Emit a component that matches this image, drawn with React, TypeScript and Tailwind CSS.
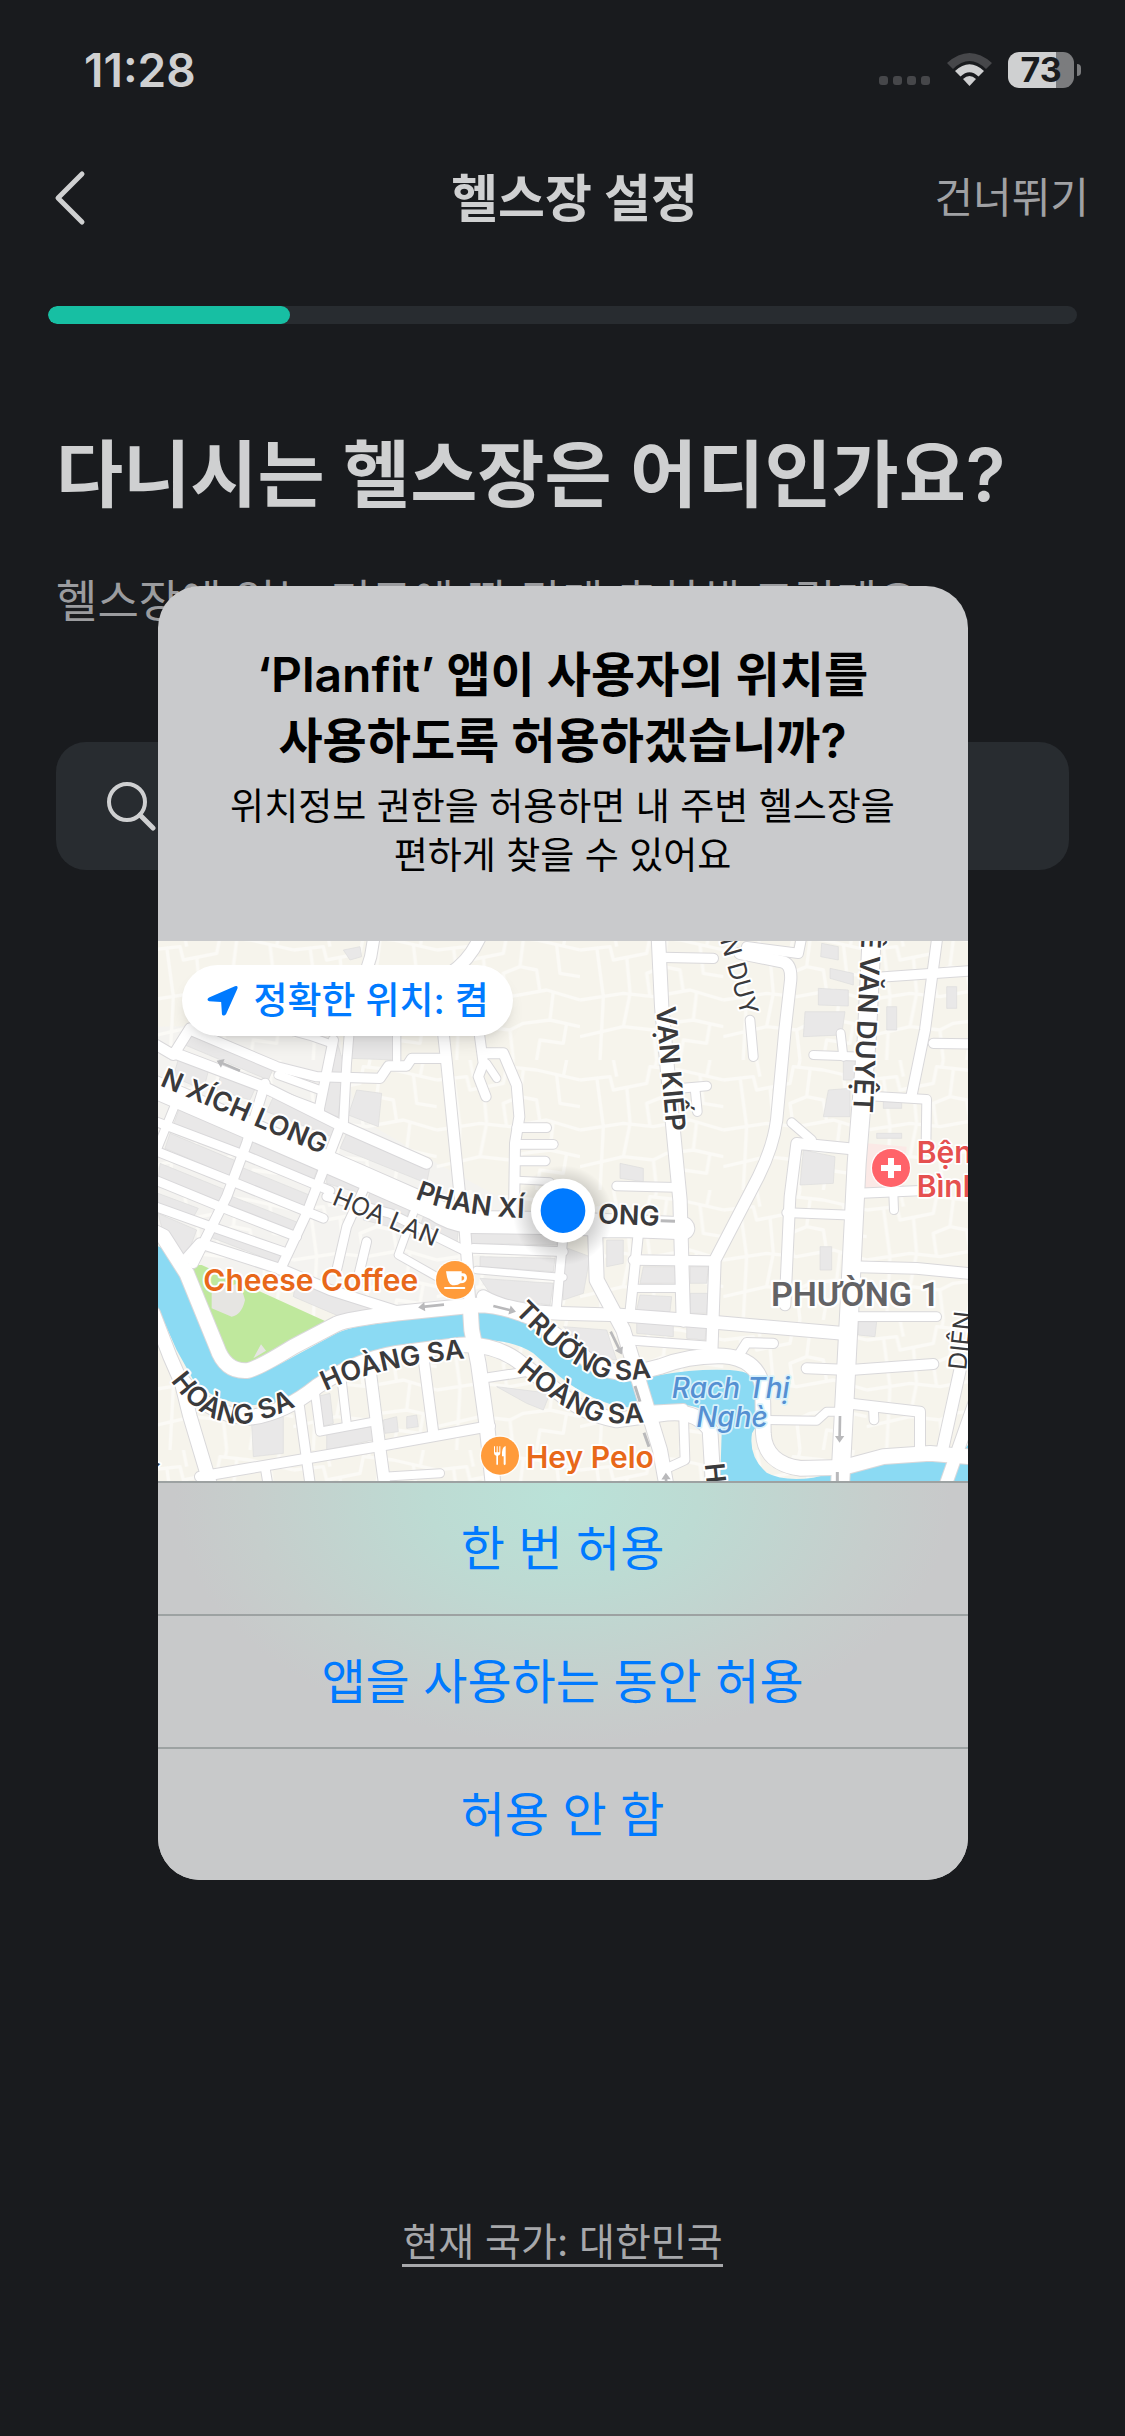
import React from "react";

type Road = { d: string; w: number };

const roads: Road[] = [
  { d: "M0 900 L40 920 L110 1030 L200 1250 Q225 1325 290 1322 Q320 1318 430 1250 L560 1182 Q590 1168 740 1150 L980 1125 Q1060 1125 1150 1165 L1290 1270 Q1350 1330 1450 1330 L1530 1310 Q1620 1275 1720 1278 Q1820 1285 1838 1370 L1840 1510 Q1845 1600 1950 1615 L2080 1612 L2200 1580 L2340 1570 L2480 1582", w: 44 },
  { d: "M10 1150 L60 1280 L95 1360 L120 1460 L180 1660", w: 40 },
  { d: "M95 1350 Q170 1455 300 1462 Q400 1450 500 1370 Q620 1290 740 1270 L930 1245 Q1030 1240 1100 1290 L1230 1390 Q1300 1450 1400 1470 L1550 1450 Q1640 1440 1680 1500 L1690 1670", w: 44 },
  { d: "M0 465 L300 595 L600 725 L850 835 Q900 870 960 876 L1240 880 L1600 895", w: 66 },
  { d: "M10 340 L70 375 L120 295", w: 30 },
  { d: "M75 370 L340 470 L580 590 L830 700", w: 32 },
  { d: "M120 300 L380 410 L500 440 L690 445 L715 408 L770 408 L785 385 L885 385", w: 28 },
  { d: "M385 435 L510 480", w: 24 },
  { d: "M345 478 L510 540", w: 24 },
  { d: "M550 330 L505 550", w: 28 },
  { d: "M600 280 L590 400 L580 590", w: 26 },
  { d: "M120 295 Q330 260 540 340", w: 20 },
  { d: "M740 300 L740 390", w: 22 },
  { d: "M672 20 L662 80 L640 150", w: 34 },
  { d: "M990 20 Q960 90 900 130", w: 36 },
  { d: "M878 290 L890 400 L930 800 L945 900 L960 1120", w: 32 },
  { d: "M985 290 L1000 400 L985 440 L1008 500", w: 28 },
  { d: "M1000 370 L1060 370 L1100 465 L1108 560 L1095 640 L1092 860", w: 30 },
  { d: "M1100 593 L1190 593", w: 26 },
  { d: "M1100 643 L1210 643", w: 26 },
  { d: "M1100 693 L1186 693", w: 26 },
  { d: "M1100 750 L1200 755", w: 20 },
  { d: "M1010 400 L1040 445", w: 22 },
  { d: "M10 572 L290 678 L540 782", w: 26 },
  { d: "M10 660 L260 760 L520 865", w: 26 },
  { d: "M10 748 L240 842 L440 920", w: 26 },
  { d: "M10 828 L170 885 L400 965", w: 26 },
  { d: "M110 985 L150 940 L400 1020 L540 1080 L760 1150", w: 30 },
  { d: "M345 460 L290 640 L230 800 L130 1000", w: 28 },
  { d: "M570 590 L520 720 L470 850 L390 1020", w: 28 },
  { d: "M85 500 L20 660", w: 24 },
  { d: "M640 780 L590 890 L560 1020", w: 26 },
  { d: "M530 800 L720 850 L880 930 L950 965", w: 26 },
  { d: "M650 935 L625 1040", w: 26 },
  { d: "M790 850 L745 975 L860 1040 L950 1090", w: 22 },
  { d: "M970 955 L1240 965", w: 26 },
  { d: "M980 1020 L1240 1042", w: 20 },
  { d: "M1240 910 L1218 1150", w: 26 },
  { d: "M1000 1100 Q1080 1145 1230 1150 L1410 1155 L1670 1175 L2080 1210", w: 38 },
  { d: "M960 1120 L965 1200 L985 1300 L1010 1480 L1030 1670", w: 44 },
  { d: "M150 1640 L680 1550 L1020 1488", w: 30 },
  { d: "M660 1320 L690 1560 L705 1670", w: 34 },
  { d: "M820 1280 L850 1510", w: 30 },
  { d: "M1000 1345 L1130 1325", w: 26 },
  { d: "M448 1430 L480 1660", w: 28 },
  { d: "M495 1390 L510 1505 L670 1475", w: 24 },
  { d: "M575 1350 L590 1480", w: 24 },
  { d: "M345 1610 L355 1670", w: 26 },
  { d: "M700 1640 L870 1630", w: 24 },
  { d: "M1525 20 L1535 230 L1560 500 L1590 810 L1600 1170", w: 40 },
  { d: "M1540 82 L1690 85", w: 28 },
  { d: "M1590 475 L1670 468", w: 26 },
  { d: "M1635 475 L1642 545", w: 26 },
  { d: "M1400 768 L1580 772", w: 26 },
  { d: "M1790 50 L1945 70 L1955 20", w: 28 },
  { d: "M1770 70 L1895 95 Q1925 100 1922 150 L1905 300 L1880 570 Q1870 650 1825 740 L1695 990 L1685 1270", w: 34 },
  { d: "M1450 990 L1690 993", w: 28 },
  { d: "M1465 910 L1440 1150", w: 28 },
  { d: "M1445 1075 L1600 1075", w: 22 },
  { d: "M1430 1230 L1680 1248", w: 26 },
  { d: "M1335 890 L1340 1050 L1420 1200 L1475 1380 L1530 1560 L1550 1670", w: 42 },
  { d: "M1330 905 L1600 905", w: 34 },
  { d: "M1500 1440 L1600 1435 L1605 1590 L1540 1620", w: 26 },
  { d: "M1770 1270 L1790 1238 L1870 1240", w: 28 },
  { d: "M1800 270 L1810 380", w: 26 },
  { d: "M2165 20 L2150 330 L2120 700 L2100 1100 L2070 1670", w: 54 },
  { d: "M2362 20 L2325 300 L2285 495", w: 30 },
  { d: "M2170 143 L2470 122", w: 28 },
  { d: "M2160 498 L2330 508 L2328 650", w: 26 },
  { d: "M2350 340 L2470 342", w: 28 },
  { d: "M2120 790 L2310 782", w: 28 },
  { d: "M2230 790 L2232 840", w: 24 },
  { d: "M1925 578 L1985 630", w: 26 },
  { d: "M2120 658 L1940 640 L1920 800 L1905 1125", w: 32 },
  { d: "M1910 848 L2120 856", w: 26 },
  { d: "M1990 375 L2140 380", w: 24 },
  { d: "M2072 310 L2080 380", w: 24 },
  { d: "M2100 1010 L2300 1015 L2470 1032", w: 32 },
  { d: "M2090 1160 L2360 1160", w: 26 },
  { d: "M1970 1315 L2100 1320 L2350 1302", w: 30 },
  { d: "M2090 1420 L2310 1445 L2310 1575", w: 30 },
  { d: "M2170 1430 L2172 1470", w: 26 },
  { d: "M1850 1470 L2000 1472 L2030 1445 L2090 1445", w: 24 },
  { d: "M2430 1320 L2375 1570", w: 34 },
  { d: "M2480 1400 L2385 1670", w: 36 },
];

const buildings = [
  "M120 310 L370 415 L355 450 L105 345Z", "M90 370 L180 405 L160 480 L70 440Z", "M215 425 L320 465 L300 510 L200 480Z",
  "M560 330 L580 400 L565 560 L520 550Z", "M600 310 L735 310 L735 390 L600 385Z", "M620 480 L695 490 L685 590 L595 555Z",
  "M370 500 L555 580 L545 620 L350 545Z", "M590 610 L840 710 L830 760 L570 655Z", "M90 530 L310 610 L290 665 L70 585Z",
  "M60 610 L275 700 L255 745 L45 655Z", "M310 630 L505 710 L490 750 L290 680Z", "M30 700 L240 785 L225 825 L24 755Z",
  "M270 710 L490 800 L470 845 L250 760Z", "M530 725 L640 765 L630 790 L530 760Z", "M24 790 L145 835 L125 870 L24 835Z",
  "M235 795 L450 880 L430 930 L215 845Z", "M190 880 L400 955 L385 1000 L165 915Z", "M24 850 L140 900 L110 980 L40 910Z",
  "M660 780 L780 830 L760 900 L640 870Z", "M820 860 L925 900 L920 950 L800 920Z", "M960 890 L1220 900 L1220 945 L960 940Z",
  "M990 980 L1215 985 L1210 1025 L990 1010Z", "M990 1045 L1210 1060 L1200 1125 L1030 1105Z", "M440 1040 L600 1080 L700 1125 L570 1160 L430 1100Z",
  "M305 1480 L400 1460 L400 1570 L310 1580Z", "M530 1510 L665 1490 L670 1530 L530 1560Z", "M700 1470 L740 1460 L745 1505 L705 1510Z",
  "M770 1460 L800 1455 L805 1490 L770 1495Z", "M500 1400 L540 1390 L550 1480 L515 1490Z", "M1240 1190 L1370 1200 L1400 1290 L1330 1280Z",
  "M1480 1010 L1590 1010 L1590 1060 L1470 1060Z", "M1470 1095 L1565 1100 L1560 1145 L1460 1140Z", "M1620 1010 L1675 1010 L1670 1060 L1620 1060Z",
  "M1620 1090 L1675 1090 L1670 1150 L1620 1150Z", "M1240 950 L1320 980 L1300 1090 L1240 1110Z", "M1370 930 L1420 930 L1420 1000 L1370 1010Z",
  "M2005 175 L2095 180 L2095 228 L2005 225Z", "M1965 245 L2085 245 L2075 315 L1960 320Z", "M2040 115 L2110 130 L2110 165 L2040 145Z",
  "M2015 40 L2065 50 L2065 90 L2012 80Z", "M2035 480 L2100 475 L2100 560 L2020 560Z", "M2210 230 L2240 230 L2240 300 L2210 300Z",
  "M2390 170 L2420 170 L2420 235 L2390 235Z", "M2080 390 L2120 390 L2115 450 L2080 450Z", "M1960 660 L2055 680 L2050 760 L1950 765Z",
  "M2010 950 L2045 950 L2045 1020 L2010 1020Z", "M2200 510 L2255 510 L2255 535 L2200 535Z", "M2180 610 L2255 610 L2255 625 L2180 625Z",
  "M580 60 L630 50 L635 80 L600 90Z", "M1410 700 L1480 715 L1480 755 L1410 745Z", "M2125 1175 L2180 1175 L2175 1220 L2125 1215Z",
  "M1460 1175 L1570 1185 L1570 1220 L1460 1210Z", "M1610 1180 L1670 1185 L1665 1230 L1610 1225Z", "M1040 1370 L1200 1390 L1180 1440 L1130 1420Z",
];

const arrows = [
  { x: 270, y: 422, angle: 203, len: 76 },
  { x: 882, y: 1124, angle: 174, len: 78 },
  { x: 1030, y: 1128, angle: 14, len: 70 },
  { x: 1382, y: 1205, angle: 64, len: 76 },
  { x: 2070, y: 1458, angle: 91, len: 80 },
  { x: 1550, y: 1700, angle: 268, len: 72 },
];

type Street = { id: string; d: string; text: string; size: number; bold?: boolean };

const streets: Street[] = [
  { id: "s1", d: "M28 466 L620 717", text: "N XÍCH LONG", size: 81, bold: true },
  { id: "s2", d: "M795 805 Q930 862 1170 866", text: "PHAN XÍ", size: 81, bold: true },
  { id: "s3", d: "M1343 880 L1580 890", text: "ONG", size: 81, bold: true },
  { id: "s4", d: "M543 822 L900 970", text: "HOA LAN", size: 75 },
  { id: "s5", d: "M1518 232 L1554 660", text: "VẠN KIẾP", size: 81, bold: true },
  { id: "s6", d: "M1710 30 L1795 330", text: "N DUY", size: 75 },
  { id: "s7", d: "M2135 6 L2104 660", text: "Ê VĂN DUYỆT", size: 81, bold: true },
  { id: "s8", d: "M62 1352 Q150 1480 275 1482 Q380 1472 540 1370", text: "HOÀNG SA", size: 81, bold: true },
  { id: "s9", d: "M527 1384 Q680 1305 1010 1280", text: "HOÀNG SA", size: 81, bold: true },
  { id: "s10", d: "M1092 1146 Q1260 1320 1370 1347 Q1450 1358 1600 1325", text: "TRƯỜNG SA", size: 81, bold: true },
  { id: "s11", d: "M1098 1322 Q1250 1450 1340 1475 Q1430 1488 1580 1466", text: "HOÀNG SA", size: 81, bold: true },
  { id: "s12", d: "M2448 1322 L2474 1080", text: "DIÊN", size: 75 },
  { id: "s13", d: "M1664 1602 L1676 1720", text: "H", size: 81, bold: true },
  { id: "s14", d: "M-6 1640 L60 1570", text: "A", size: 75, bold: true },
];

function Pin({ x, y, color, children }: { x: number; y: number; color: string; children: React.ReactNode }) {
  return (
    <g transform={`translate(${x} ${y})`}>
      <circle r="61" fill="#ffffff" opacity="0.8" />
      <circle r="57" fill={color} />
      {children}
    </g>
  );
}

function LocationMap() {
  return (
    <svg viewBox="24 33 2430 1620" className="block w-full font-['Inter','Noto_Sans',sans-serif]" role="img" aria-label="현재 위치 지도">
      <defs>
        <pattern id="alleys" width="430" height="390" patternUnits="userSpaceOnUse">
          <g fill="none" stroke="#fbfaf6" strokeWidth="10" strokeLinejoin="round">
            <path d="M0 60 L90 50 L100 90 L200 70 L210 20 L300 30 L430 60" />
            <path d="M50 50 L70 200 L60 390 M0 210 L130 190 L220 200 L330 180 L430 210" />
            <path d="M140 80 L150 190 L130 290 L220 300 L230 390 M0 320 L130 290" />
            <path d="M260 30 L250 110 L300 120 L310 185 M250 110 L200 130 L210 200" />
            <path d="M360 45 L370 130 L430 140 M350 185 L340 270 L430 290 M340 270 L260 280 L220 300" />
            <path d="M300 390 L310 330 L380 340 L390 280 M100 0 L110 50 M230 0 L225 25 M390 0 L380 50" />
          </g>
        </pattern>
        <radialGradient id="dotShadow">
          <stop offset="0.55" stopColor="#000000" stopOpacity="0.2" />
          <stop offset="1" stopColor="#000000" stopOpacity="0" />
        </radialGradient>
        {streets.map((s) => (
          <path key={s.id} id={s.id} d={s.d} />
        ))}
      </defs>

      <rect x="24" y="33" width="2430" height="1620" fill="#f6f4ec" />
      <path d="M24 290 L560 280 L620 560 L860 700 L1230 900 L1230 1130 L740 1150 L110 1010 L24 900Z" fill="#f4f3f0" />
      <rect x="24" y="33" width="2430" height="1620" fill="url(#alleys)" />
      <path d="M2150 640 L2270 650 L2260 780 L2140 790Z" fill="#fbe9e6" />
      {buildings.map((d) => (
        <path key={d} d={d} fill="#e9e8e8" stroke="#dcdcdc" strokeWidth="2" />
      ))}
      <path d="M125 1005 L155 1005 L530 1175 L310 1300 L245 1300 L215 1270Z" fill="#bfe89d" />
      <path d="M185 1080 L270 1060 L285 1110 Q275 1155 245 1160 L185 1135Z M310 1285 L333 1243 L348 1262Z" fill="#e6e5e2" />
      <path
        d="M0 945 Q40 945 65 985 L110 1080 L205 1290 Q240 1345 300 1345 L400 1297 L560 1210 Q590 1195 640 1187 L935 1145 Q1060 1135 1150 1190 L1230 1250 Q1330 1350 1440 1350 L1530 1335 Q1640 1315 1740 1320 Q1825 1325 1835 1380 L1835 1460 L1806 1510 Q1795 1580 1850 1628 Q1900 1655 1990 1643 L2130 1610 L2300 1590 L2470 1600 L2470 1670 L1710 1670 L1715 1510 Q1690 1430 1600 1425 L1430 1432 Q1330 1420 1230 1340 L1150 1270 Q1090 1230 990 1230 L800 1250 Q650 1275 530 1340 L440 1390 Q390 1425 300 1425 Q190 1415 130 1350 L80 1260 L0 1080Z"
        fill="#8bdaf3"
      />
      <path d="M2454 1545 L2440 1560 L2454 1564Z" fill="#8bdaf3" />

      <g fill="none" strokeLinecap="round" strokeLinejoin="round">
        {roads.map((r) => (
          <path key={r.d} d={r.d} stroke="#d9d8da" strokeWidth={r.w + 6} />
        ))}
        {roads.map((r) => (
          <path key={r.d} d={r.d} stroke="#ffffff" strokeWidth={r.w} />
        ))}
      </g>

      {arrows.map((a) => (
        <g key={`${a.x}-${a.y}`} transform={`translate(${a.x} ${a.y}) rotate(${a.angle})`}>
          <path d={`M0 -4 H${a.len - 20} V-14 L${a.len} 0 L${a.len - 20} 14 V4 H0Z`} fill="#b9b9bb" />
        </g>
      ))}
      <path d="M1455 1368 L1470 1415 M1482 1508 L1497 1550 M1532 872 L1575 874 M2062 1626 V1660" stroke="#b9b9bb" strokeWidth="9" />

      <g stroke="#ffffff" strokeLinejoin="round" style={{ paintOrder: "stroke" }}>
        {streets.map((s) => (
          <text key={s.id} fontSize={s.size} fontWeight={s.bold ? 600 : 400} fill="#3a3a3c" strokeWidth="12">
            <textPath href={`#${s.id}`}>{s.text}</textPath>
          </text>
        ))}
        <text x="160" y="1082" fontSize="90" fontWeight="600" fill="#e8681a" strokeWidth="12">Cheese Coffee</text>
        <text x="1128" y="1613" fontSize="90" fontWeight="600" fill="#e8681a" strokeWidth="12">Hey Pelo</text>
        <text x="2300" y="698" fontSize="90" fontWeight="600" fill="#e5504f" strokeWidth="10">Bện</text>
        <text x="2300" y="802" fontSize="90" fontWeight="600" fill="#e5504f" strokeWidth="10">Bình</text>
        <text x="2116" y="1129" textAnchor="middle" fontSize="102" fontWeight="600" fill="#636366" strokeWidth="14" className="font-['Roboto',sans-serif]">PHƯỜNG 1</text>
        <g fontStyle="italic" fontWeight="500" fontSize="84" fill="#5590d2" stroke="#d9f2fb" strokeWidth="10" textAnchor="middle">
          <text x="1742" y="1405">Rạch Thị</text>
          <text x="1746" y="1491">Nghè</text>
        </g>
      </g>

      <Pin x={915} y={1050} color="#ff9b3a">
        <path d="M-27 -26 H20 V-20 Q36 -22 36 -6 Q35 10 16 10 Q10 16 -2 16 H-8 Q-22 14 -27 -26Z M20 -12 V2 Q28 1 28 -6 Q28 -12 20 -12Z" fill="#ffffff" fillRule="evenodd" />
        <rect x="-33" y="21" width="64" height="6" rx="3" fill="#ffffff" />
      </Pin>
      <Pin x={1050} y={1577} color="#ff9b3a">
        <path d="M-18 -28 V-10 Q-18 0 -11 0 V26 Q-9 31 -6 26 V0 Q1 0 1 -10 V-28 H-2 V-10 H-7 V-28 H-10 V-10 H-15 V-28Z M17 -29 Q4 -26 6 2 H11 V26 Q14 31 17 26Z" fill="#ffffff" />
      </Pin>
      <Pin x={2223} y={714} color="#ff6369">
        <path d="M-9 -30 H9 V-9 H30 V9 H9 V30 H-9 V9 H-30 V-9 H-9Z" fill="#ffffff" />
      </Pin>

      <circle cx="1239" cy="856" r="150" fill="url(#dotShadow)" />
      <circle cx="1239" cy="842" r="96" fill="#ffffff" />
      <circle cx="1239" cy="842" r="67" fill="#007aff" />
    </svg>
  );
}

function StatusBar() {
  return (
    <div className="flex h-[140px] items-center justify-between pl-[84px] pr-11">
      <span className="text-[46px] font-semibold leading-none text-[#cfd0d1]">11:28</span>
      <div className="flex items-center gap-4">
        <svg width="52" height="36" viewBox="0 0 52 36" aria-hidden="true">
          {[0, 14, 28, 42].map((x) => (
            <rect key={x} x={x} y="24" width="9" height="9" rx="3" fill="#46474a" />
          ))}
        </svg>
        <svg width="45" height="34" viewBox="0 0 45 34" aria-label="Wi-Fi" role="img">
          <path d="M0 10 Q22.500 -10 45 10 L39 16 Q22.500 0 6 16Z" fill="#46474a" />
          <path d="M8 18 Q22.500 4.500 37 18 L31.500 23.500 Q22.500 15 13.500 23.500Z" fill="#cfd0d1" />
          <path d="M16 26 Q22.500 20 29 26 L22.500 33Z" fill="#cfd0d1" />
        </svg>
        <div className="flex items-center gap-[3px]">
          <div className="flex h-9 w-[66px] items-center justify-center rounded-[11px] bg-linear-to-r from-[#cfd0d1] from-73% to-[#7b7c7e] to-73%">
            <span className="text-[34px] font-bold leading-none text-[#191b1e]">73</span>
          </div>
          <div className="h-3 w-1 rounded-r-full bg-[#7b7c7e]" />
        </div>
      </div>
    </div>
  );
}

const choices = ["한 번 허용", "앱을 사용하는 동안 허용", "허용 안 함"];

function PermissionDialog() {
  return (
    <div className="absolute inset-x-0 top-[586px] flex justify-center">
      <section role="dialog" aria-labelledby="permission-title" className="w-[72%] overflow-hidden rounded-[42px] bg-[#c9cacc]">
        <div className="flex h-[355px] flex-col items-center pt-[56px] text-center text-black">
          <h2 id="permission-title" className="text-[48px] font-semibold leading-[66px]">
            ‘Planfit’ 앱이 사용자의 위치를
            <br />
            사용하도록 허용하겠습니까?
          </h2>
          <p className="mt-2 text-[37px] leading-[49px]">
            위치정보 권한을 허용하면 내 주변 헬스장을
            <br />
            편하게 찾을 수 있어요
          </p>
        </div>
        <div className="relative">
          <LocationMap />
          <button type="button" className="absolute left-6 top-6 flex h-[71px] items-center gap-4 rounded-full bg-white pl-[25px] pr-6 text-[37px] font-medium leading-none text-[#007aff] shadow-lg shadow-black/10">
            <svg width="31" height="31" viewBox="0 0 30 30" aria-hidden="true">
              <path d="M27 1.200 Q30.500 0.300 29.300 3.800 L18.500 28 Q16.500 31 14.500 28.500 L13.700 16.500 L2 15.700 Q-1 14.200 2 12Z" fill="#007aff" />
            </svg>
            정확한 위치: 켬
          </button>
        </div>
        <div className="bg-[radial-gradient(ellipse_48%_62%_at_50%_4%,#bae2d8_0%,#bddbd3_35%,#c6cecc_80%,#c8c9ca_100%)]">
          {choices.map((label) => (
            <button key={label} type="button" className="flex h-[133px] w-full items-center justify-center border-t-2 border-[#9da2a2] text-[48px] leading-none text-[#007aff]">
              {label}
            </button>
          ))}
        </div>
      </section>
    </div>
  );
}

export default function App() {
  const progress = 23.5;
  return (
    <div className="relative flex min-h-screen w-full flex-col bg-[#191b1e] font-['Inter','Noto_Sans_CJK_KR',sans-serif] text-[#cfd0d1]">
      <StatusBar />
      <header className="grid h-[116px] grid-cols-3 items-center px-9">
        <button type="button" aria-label="뒤로" className="ml-4 justify-self-start">
          <svg width="36" height="56" viewBox="0 0 36 56" fill="none" stroke="#cfd0d1" strokeWidth="5" strokeLinecap="round" strokeLinejoin="round" aria-hidden="true">
            <path d="M30 4 L6 28 L30 52" />
          </svg>
        </button>
        <h1 className="justify-self-center whitespace-nowrap pl-8 text-[51px] font-bold leading-none -ml-2">헬스장 설정</h1>
        <button type="button" className="justify-self-end whitespace-nowrap text-[42px] leading-none text-[#a0a1a4]">건너뛰기</button>
      </header>
      <div role="progressbar" aria-label="진행률" aria-valuenow={progress} className="mx-12 mt-[50px] h-[18px] overflow-hidden rounded-full bg-[#282c30]">
        <div className="h-full rounded-full bg-[#17bfa3]" style={{ width: `${progress}%` }} />
      </div>
      <main className="flex flex-col px-14">
        <h2 className="mt-[98px] whitespace-nowrap text-[73px] font-semibold leading-[106px]">다니시는 헬스장은 어디인가요?</h2>
        <p className="mt-[42px] whitespace-nowrap text-[45px] leading-[64px] text-[#9b9c9f]">헬스장에 있는 기구에 딱 맞게 추천해 드릴게요</p>
        <label className="mt-[108px] flex h-32 items-center gap-6 rounded-[30px] bg-[#282c30] pl-[50px] pr-8">
          <svg width="50" height="50" viewBox="0 0 50 50" fill="none" stroke="#cfd0d1" strokeWidth="4" strokeLinecap="round" aria-hidden="true">
            <circle cx="21" cy="21" r="18" />
            <path d="M34 34 L47 47" strokeWidth="5" />
          </svg>
          <input type="search" aria-label="헬스장 검색" className="h-full min-w-0 flex-1 bg-transparent text-[42px] outline-none" />
        </label>
      </main>
      <footer className="mt-auto flex h-[216px] items-start justify-center">
        <a href="#country" className="border-b-3 border-[#a7a8ab] text-[39px] leading-[44px] text-[#a7a8ab]">현재 국가: 대한민국</a>
      </footer>
      <PermissionDialog />
    </div>
  );
}
